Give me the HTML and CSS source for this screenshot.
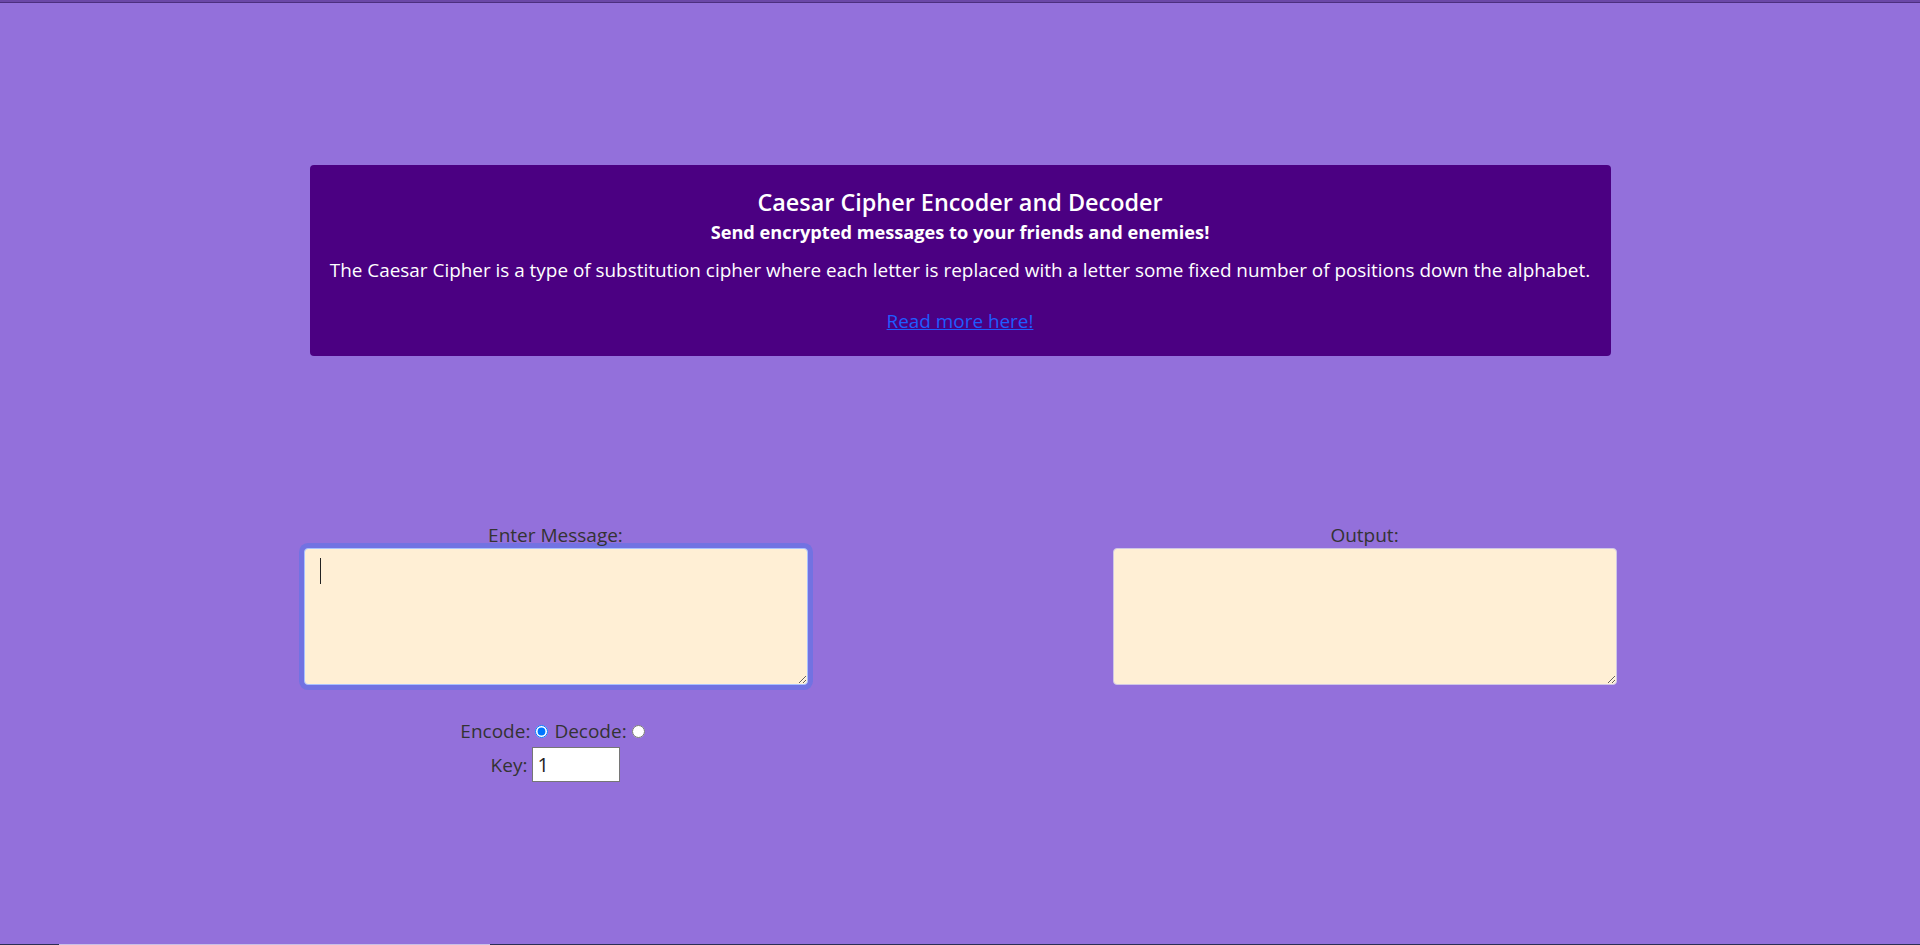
FILE: index.html
```html
<!DOCTYPE html>
<html lang="en">
<head>
<meta charset="utf-8">
<title>Caesar Cipher</title>
<link rel="stylesheet" href="styles.css">
</head>
<body>
<div class="topbar"></div>
<main class="page">
  <header class="intro">
    <h1 class="intro-title">Caesar Cipher Encoder and Decoder</h1>
    <h2 class="intro-sub">Send encrypted messages to your friends and enemies!</h2>
    <p class="intro-text">The Caesar Cipher is a type of substitution cipher where each letter is replaced with a letter some fixed number of positions down the alphabet.</p>
    <a class="intro-link" href="#">Read more here!</a>
  </header>
  <section class="workspace">
    <div class="column">
      <label class="field-label" for="msg">Enter Message:</label>
      <div class="area-wrap">
        <textarea id="msg" class="area area-focused"></textarea>
        <span class="caret"></span>
      </div>
      <div class="options">
        <div class="option-row">
          <label for="enc">Encode:</label><input class="radio" type="radio" id="enc" name="mode" checked>
          <label for="dec">Decode:</label><input class="radio" type="radio" id="dec" name="mode">
        </div>
        <div class="option-row">
          <label for="key">Key:</label><input class="key" type="text" id="key" value="1">
        </div>
      </div>
    </div>
    <div class="column">
      <label class="field-label" for="out">Output:</label>
      <div class="area-wrap">
        <textarea id="out" class="area" readonly></textarea>
      </div>
    </div>
  </section>
</main>
<div class="bottombar"></div>
</body>
</html>
```

FILE: styles.css
```css
html, body {
  margin: 0;
  padding: 0;
  height: 100%;
}
body {
  background: #9370db;
  font-family: "Open Sans", "Noto Sans", sans-serif;
  color: #333;
  display: flex;
  flex-direction: column;
  overflow: hidden;
}
.topbar {
  height: 2px;
  background: #6b48a8;
  border-bottom: 1px solid #4d2f80;
  flex: none;
}
.page {
  flex: 1;
}
.intro {
  width: 1301px;
  height: 191px;
  box-sizing: border-box;
  margin: 162px auto 0;
  background: #4b0082;
  border-radius: 4px;
  color: #fff;
  text-align: center;
  padding-top: 21px;
}
.intro-title {
  margin: 0;
  font-size: 23.4px;
  font-weight: 600;
  line-height: 32px;
}
.intro-sub {
  margin: 0;
  font-size: 18.2px;
  font-weight: 700;
  line-height: 28px;
}
.intro-text {
  margin: 11px 0 0;
  font-size: 18.9px;
  line-height: 26px;
}
.intro-link {
  display: inline-block;
  margin-top: 25px;
  font-size: 18.9px;
  line-height: 26px;
  color: #1f5cff;
  text-decoration: underline;
}
.workspace {
  width: 1313px;
  margin: 166px auto 0;
  display: flex;
  justify-content: space-between;
}
.column {
  width: 504px;
  display: flex;
  flex-direction: column;
  align-items: center;
}
.field-label {
  position: relative;
  z-index: 1;
  font-size: 19px;
  line-height: 26px;
}
.area-wrap {
  position: relative;
  width: 100%;
}
.area {
  display: block;
  width: 100%;
  height: 137px;
  box-sizing: border-box;
  margin: 0;
  padding: 10px 15px;
  background: #ffefd5;
  border: 1px solid #cfc6e6;
  border-radius: 4px;
  font-family: inherit;
  font-size: 20px;
  resize: vertical;
  outline: none;
}
.area-focused {
  border-color: #a9c1ff;
  box-shadow: 0 0 0 5px #7272e2;
}
.caret {
  position: absolute;
  left: 16px;
  top: 10px;
  width: 1px;
  height: 26px;
  background: #222;
}
.options {
  margin-top: 35px;
  display: flex;
  flex-direction: column;
  align-items: center;
  gap: 5px;
  font-size: 19px;
  line-height: 22px;
}
.option-row {
  display: flex;
  align-items: center;
}
.radio {
  width: 13px;
  height: 13px;
  margin: 0 6px 0 5px;
}
.key {
  width: 88px;
  height: 35px;
  box-sizing: border-box;
  margin-left: 5px;
  padding: 2px 4px;
  border: 1px solid #767676;
  background: #fff;
  font-family: inherit;
  font-size: 20px;
  color: #222;
}
.bottombar {
  flex: none;
  height: 1px;
  background: linear-gradient(to right, #2a2f55 0 59px, #c9c0e6 59px 490px, #2a2f55 490px);
}
```
